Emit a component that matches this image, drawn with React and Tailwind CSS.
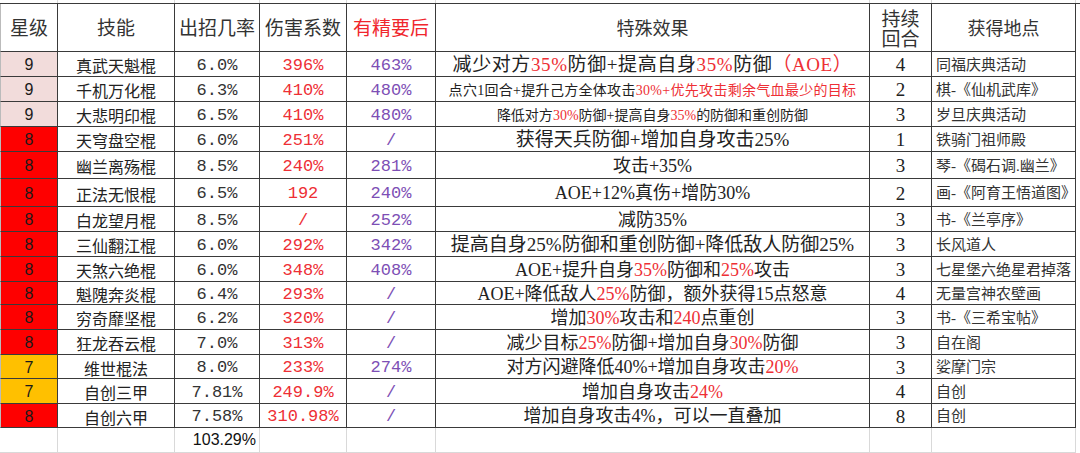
import React from 'react';

// column widths taken from the sheet
const cols = 'grid grid-cols-[58px_117px_85px_87px_89px_434px_62px_144px]';

const starBg = {
    9: 'bg-[#f2dcdb]',
    8: 'bg-[#fe0000]',
    7: 'bg-[#ffc000]',
};

const rows = [
    { star: 9, name: '真武天魁棍', rate: '6.0%', dmg: '396%', jing: '463%', fx: [['减少对方'], ['35%', 1], ['防御+提高自身'], ['35%', 1], ['防御'], ['（AOE）', 1]], fxSize: 'text-[19px] tracking-[0.6px]', turns: '4', place: '同福庆典活动', h: 'h-[25px]' },
    { star: 9, name: '千机万化棍', rate: '6.3%', dmg: '410%', jing: '480%', fx: [['点穴1回合+提升己方全体攻击'], ['30%+优先攻击剩余气血最少的目标', 1]], fxSize: 'text-[14px] tracking-[0.3px]', turns: '2', place: '棋-《仙机武库》', h: 'h-[25px]' },
    { star: 9, name: '大悲明印棍', rate: '6.5%', dmg: '410%', jing: '480%', fx: [['降低对方'], ['30%', 1], ['防御+提高自身'], ['35%', 1], ['的防御和重创防御']], fxSize: 'text-[14px]', turns: '3', place: '岁旦庆典活动', h: 'h-[25px]' },
    { star: 8, name: '天穹盘空棍', rate: '6.0%', dmg: '251%', jing: '/', fx: [['获得天兵防御+增加自身攻击25%']], fxSize: 'text-[19px]', turns: '1', place: '铁骑门祖师殿', h: 'h-[25px]' },
    { star: 8, name: '幽兰离殇棍', rate: '8.5%', dmg: '240%', jing: '281%', fx: [['攻击+35%']], fxSize: 'text-[18px]', turns: '3', place: '琴-《碣石调.幽兰》', h: 'h-[27px]' },
    { star: 8, name: '正法无恨棍', rate: '6.5%', dmg: '192', jing: '240%', fx: [['AOE+12%真伤+增防30%']], fxSize: 'text-[18px]', turns: '2', place: '画-《阿育王悟道图》', h: 'h-[28px]' },
    { star: 8, name: '白龙望月棍', rate: '8.5%', dmg: '/', jing: '252%', fx: [['减防35%']], fxSize: 'text-[18px]', turns: '3', place: '书-《兰亭序》', h: 'h-[25px]' },
    { star: 8, name: '三仙翻江棍', rate: '6.0%', dmg: '292%', jing: '342%', fx: [['提高自身25%防御和重创防御+降低敌人防御25%']], fxSize: 'text-[19px]', turns: '3', place: '长风道人', h: 'h-[25px]' },
    { star: 8, name: '天煞六绝棍', rate: '6.0%', dmg: '348%', jing: '408%', fx: [['AOE+提升自身'], ['35%', 1], ['防御和'], ['25%', 1], ['攻击']], fxSize: 'text-[18px]', turns: '3', place: '七星堡六绝星君掉落', h: 'h-[25px]' },
    { star: 8, name: '魁隗奔炎棍', rate: '6.4%', dmg: '293%', jing: '/', fx: [['AOE+降低敌人'], ['25%', 1], ['防御，额外获得15点怒意']], fxSize: 'text-[18px]', turns: '4', place: '无量宫神农壁画', h: 'h-[23px]' },
    { star: 8, name: '穷奇靡坚棍', rate: '6.2%', dmg: '320%', jing: '/', fx: [['增加'], ['30%', 1], ['攻击和'], ['240', 1], ['点重创']], fxSize: 'text-[18px]', turns: '3', place: '书-《三希宝帖》', h: 'h-[25px]' },
    { star: 8, name: '狂龙吞云棍', rate: '7.0%', dmg: '313%', jing: '/', fx: [['减少目标'], ['25%', 1], ['防御+增加自身'], ['30%', 1], ['防御']], fxSize: 'text-[18px]', turns: '3', place: '自在阁', h: 'h-[25px]' },
    { star: 7, name: '维世棍法', rate: '8.0%', dmg: '233%', jing: '274%', fx: [['对方闪避降低40%+增加自身攻击'], ['20%', 1]], fxSize: 'text-[18px]', turns: '3', place: '娑摩门宗', h: 'h-[24px]' },
    { star: 7, name: '自创三甲', rate: '7.81%', dmg: '249.9%', jing: '/', fx: [['增加自身攻击'], ['24%', 1]], fxSize: 'text-[18px]', turns: '4', place: '自创', h: 'h-[25px]' },
    { star: 8, name: '自创六甲', rate: '7.58%', dmg: '310.98%', jing: '/', fx: [['增加自身攻击4%，可以一直叠加']], fxSize: 'text-[18px]', turns: '8', place: '自创', h: 'h-[24px]' },
];

const sans = "font-['Noto_Sans_CJK_SC',sans-serif]";
const serif = "font-['Liberation_Serif','Noto_Sans_CJK_SC',serif]";
const mono = "font-['Liberation_Mono','Noto_Sans_CJK_SC',monospace]";

function Cell({ className = '', children }) {
    return (
        <div className={`border-r border-b border-[#3a3a3a] flex items-center justify-center overflow-hidden whitespace-nowrap ${className}`}>
            {children}
        </div>
    );
}

export default function App() {
    return (
        <div className="w-[1080px] h-[453px] bg-white overflow-hidden text-[#222]">
            {/* faint sheet grid above the table */}
            <div className={`${cols} h-[3px]`}>
                {[0, 1, 2, 3, 4, 5, 6, 7].map((i) => (
                    <div key={i} className="border-r border-[#d9d9d9]" />
                ))}
            </div>

            {/* header */}
            <div className={`${cols} h-[49px] border-t border-[#3a3a3a] ${sans} text-[19px] text-[#333]`}>
                <Cell className="border-l border-l-[#bbb]">星级</Cell>
                <Cell>技能</Cell>
                <Cell>出招几率</Cell>
                <Cell>伤害系数</Cell>
                <Cell className="text-[#f0262d]">有精要后</Cell>
                <Cell className="text-[18px]">特殊效果</Cell>
                <Cell className="flex-col leading-[20px]">
                    <div className="h-[20px]">持续</div>
                    <div className="h-[20px]">回合</div>
                </Cell>
                <Cell className="text-[18px]">获得地点</Cell>
            </div>

            {rows.map((r) => (
                <div key={r.name} className={`${cols} ${r.h}`}>
                    <Cell className={`${starBg[r.star]} border-l border-l-[#bbb] font-['Liberation_Sans',sans-serif] text-[16px] text-[#1a1a1a] pt-[2px]`}>
                        {r.star}
                    </Cell>
                    <Cell className={`${sans} text-[16px] pt-[2px]`}>{r.name}</Cell>
                    <Cell className={`${mono} text-[17px] text-[#333] pt-[3px]`}>{r.rate}</Cell>
                    <Cell className={`${mono} text-[17px] text-[#ee2f35] pt-[3px]`}>{r.dmg}</Cell>
                    <Cell className={`${mono} text-[17px] text-[#7d4fb5] pt-[3px]`}>{r.jing}</Cell>
                    <Cell className={`${serif} ${r.fxSize} text-[#222] pt-[2px]`}>
                        {r.fx.map(([t, red], i) => (
                            <span key={i} className={red ? 'text-[#ee2f35]' : ''}>{t}</span>
                        ))}
                    </Cell>
                    <Cell className={`${serif} text-[19px] text-[#222] pt-[3px]`}>{r.turns}</Cell>
                    <Cell className={`${serif} text-[15px] text-[#333] justify-start pl-[4px] pt-[2px]`}>{r.place}</Cell>
                </div>
            ))}

            {/* totals row, plain sheet grid */}
            <div className={`${cols} h-[25px]`}>
                {[0, 1, 2, 3, 4, 5, 6, 7].map((i) => (
                    <div
                        key={i}
                        className="border-r border-b border-[#d9d9d9] flex items-center justify-end pr-[3px] font-['Liberation_Sans',sans-serif] text-[16px] text-[#111]"
                    >
                        {i === 2 ? '103.29%' : ''}
                    </div>
                ))}
            </div>
        </div>
    );
}
